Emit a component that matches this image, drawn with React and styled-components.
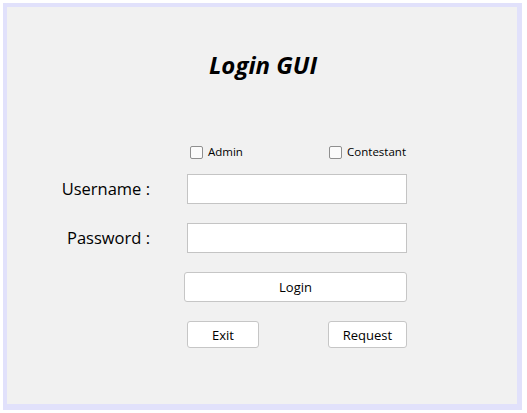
import React from "react";
import styled, { createGlobalStyle } from "styled-components";

const GlobalStyle = createGlobalStyle`
  html, body {
    margin: 0;
    padding: 0;
    background: #ffffff;
  }
  body {
    font-family: "Open Sans", "Noto Sans", sans-serif;
    color: #000;
  }
`;

const Frame = styled.div`
  box-sizing: border-box;
  margin: 3px;
  width: 519px;
  height: 407px;
  border: 4px solid #e1e1fb;
  border-right-width: 5px;
  border-bottom-width: 6px;
  background: #f1f1f1;
  display: flex;
  flex-direction: column;
`;

const Title = styled.h1`
  margin: 44px 0 0;
  text-align: center;
  font-size: 24px;
  line-height: 28px;
  font-weight: 700;
  font-style: italic;
  padding-left: 2px;
`;

const Form = styled.div`
  margin-top: 65px;
  display: grid;
  grid-template-columns: 143px 223px;
  column-gap: 34px;
  align-items: start;
`;

const CheckRow = styled.div`
  grid-column: 2;
  height: 16px;
  display: flex;
  justify-content: space-between;
  padding-left: 6px;
  margin-bottom: 14px;
`;

const Check = styled.label`
  display: flex;
  align-items: center;
  gap: 5px;
  font-size: 11.5px;
  line-height: 16px;
  margin-right: ${(p) => p.$mr || 0}px;
`;

const Box = styled.span`
  box-sizing: border-box;
  width: 13px;
  height: 13px;
  border: 1px solid #8f8f8f;
  border-radius: 2px;
  background: #fbfbfb;
`;

const Label = styled.div`
  grid-column: 1;
  text-align: right;
  font-size: 16.5px;
  line-height: 30px;
  height: 30px;
`;

const Input = styled.div`
  grid-column: 2;
  box-sizing: border-box;
  margin-left: 3px;
  height: 30px;
  background: #fff;
  border: 1px solid #c4c4c4;
  margin-bottom: 19px;
`;

const Button = styled.button`
  box-sizing: border-box;
  height: ${(p) => p.$h || 30}px;
  width: ${(p) => (p.$w ? `${p.$w}px` : "100%")};
  background: #fff;
  border: 1px solid #c6c6c6;
  border-radius: 3px;
  font-family: "Open Sans", "Noto Sans", sans-serif;
  font-size: 13px;
  color: #000;
  padding: 0;
`;

const LoginSlot = styled.div`
  grid-column: 2;
  margin-bottom: 19px;
`;

const ButtonRow = styled.div`
  grid-column: 2;
  display: flex;
  justify-content: space-between;
  padding-left: 3px;
`;

export default function App() {
  return (
    <>
      <GlobalStyle />
      <Frame>
        <Title>Login GUI</Title>
        <Form>
          <CheckRow>
            <Check>
              <Box />
              Admin
            </Check>
            <Check $mr={1}>
              <Box />
              Contestant
            </Check>
          </CheckRow>
          <Label>Username :</Label>
          <Input />
          <Label>Password :</Label>
          <Input />
          <LoginSlot>
            <Button>Login</Button>
          </LoginSlot>
          <ButtonRow>
            <Button $w={72} $h={27}>Exit</Button>
            <Button $w={79} $h={27}>Request</Button>
          </ButtonRow>
        </Form>
      </Frame>
    </>
  );
}
